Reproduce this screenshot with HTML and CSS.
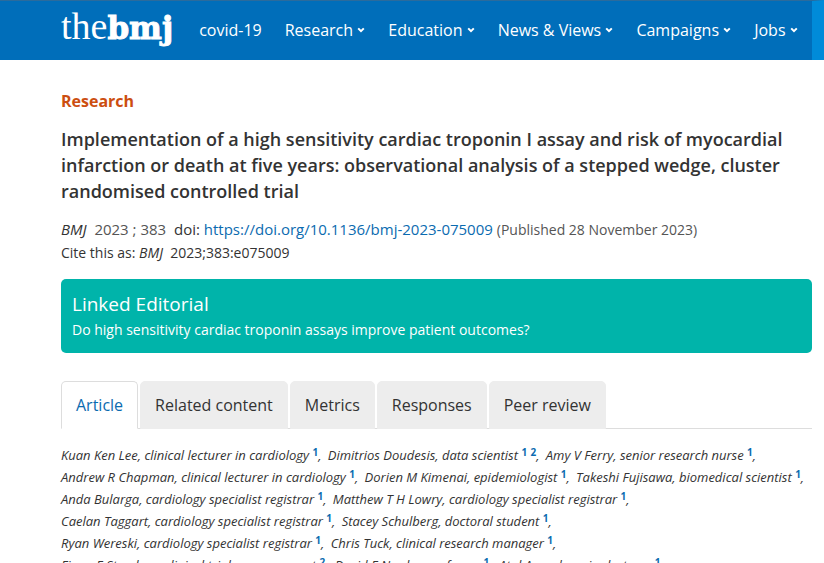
FILE: index.html
```html
<!DOCTYPE html>
<html lang="en">
<head>
    <meta charset="UTF-8">
    <meta name="viewport" content="width=device-width, initial-scale=1.0">
    <title>Implementation of a high sensitivity cardiac troponin I assay | The BMJ</title>
    <link rel="stylesheet" href="styles.css">
</head>
<body>
    <header class="site-header">
        <a class="logo" href="#">the<b>bmj</b></a>
        <nav class="main-nav">
            <a href="#">covid-19</a>
            <a href="#">Research <svg class="caret" viewBox="0 0 8 6"><path d="M1.2 1.4 4 4.2 6.8 1.4"/></svg></a>
            <a href="#">Education <svg class="caret" viewBox="0 0 8 6"><path d="M1.2 1.4 4 4.2 6.8 1.4"/></svg></a>
            <a href="#">News &amp; Views <svg class="caret" viewBox="0 0 8 6"><path d="M1.2 1.4 4 4.2 6.8 1.4"/></svg></a>
            <a href="#">Campaigns <svg class="caret" viewBox="0 0 8 6"><path d="M1.2 1.4 4 4.2 6.8 1.4"/></svg></a>
            <a href="#">Jobs <svg class="caret" viewBox="0 0 8 6"><path d="M1.2 1.4 4 4.2 6.8 1.4"/></svg></a>
        </nav>
    </header>

    <main class="article">
        <p class="section-label">Research</p>
        <h1>Implementation of a high sensitivity cardiac troponin I assay and risk of myocardial infarction or death at five years: observational analysis of a stepped wedge, cluster randomised controlled trial</h1>

        <div class="citation">
            <p class="doi"><em>BMJ</em>&nbsp; <span class="muted">2023 ; 383</span>&nbsp; doi: <a href="https://doi.org/10.1136/bmj-2023-075009">https://doi.org/10.1136/bmj-2023-075009</a> <span class="muted published">(Published 28 November 2023)</span></p>
            <p>Cite this as: <em>BMJ</em>&nbsp; 2023;383:e075009</p>
        </div>

        <section class="linked">
            <h2>Linked Editorial</h2>
            <a href="#">Do high sensitivity cardiac troponin assays improve patient outcomes?</a>
        </section>

        <nav class="tabs">
            <a class="tab active" href="#">Article</a>
            <a class="tab" href="#">Related content</a>
            <a class="tab" href="#">Metrics</a>
            <a class="tab" href="#">Responses</a>
            <a class="tab" href="#">Peer review</a>
        </nav>

        <ul class="authors">
            <li>Kuan Ken Lee, clinical lecturer in cardiology <a href="#">1</a>,</li>
            <li>Dimitrios Doudesis, data scientist <a href="#">1</a> <a href="#">2</a>,</li>
            <li>Amy V Ferry, senior research nurse <a href="#">1</a>,</li>
            <li>Andrew R Chapman, clinical lecturer in cardiology <a href="#">1</a>,</li>
            <li>Dorien M Kimenai, epidemiologist <a href="#">1</a>,</li>
            <li>Takeshi Fujisawa, biomedical scientist <a href="#">1</a>,</li>
            <li>Anda Bularga, cardiology specialist registrar <a href="#">1</a>,</li>
            <li>Matthew T H Lowry, cardiology specialist registrar <a href="#">1</a>,</li>
            <li>Caelan Taggart, cardiology specialist registrar <a href="#">1</a>,</li>
            <li>Stacey Schulberg, doctoral student <a href="#">1</a>,</li>
            <li>Ryan Wereski, cardiology specialist registrar <a href="#">1</a>,</li>
            <li>Chris Tuck, clinical research manager <a href="#">1</a>,</li>
            <li>Fiona E Strachan, clinical trials management <a href="#">2</a>,</li>
            <li>David E Newby, professor <a href="#">1</a>,</li>
            <li>Atul Anand, senior lecturer <a href="#">1</a></li>
        </ul>
    </main>
</body>
</html>
```
FILE: styles.css
```css
* {
    box-sizing: border-box;
}

body {
    margin: 0;
    background: #fff;
    color: #333;
    font-family: "Open Sans", "Noto Sans", sans-serif;
    font-size: 14px;
    overflow: hidden;
}

p, h1, h2 {
    margin: 0;
}

a {
    color: #0b6bb0;
    text-decoration: none;
}

.site-header {
    display: flex;
    height: 60px;
    padding-left: 61px;
    background: #006eba;
    border-top: 1px solid #2b6b9c;
    border-right: 12px solid #008bd9;
}

.logo {
    height: 60px;
    line-height: 50px;
    color: #fff;
    font-family: "Liberation Serif", serif;
    font-size: 38px;
    white-space: nowrap;
}

.logo b {
    font-family: "DejaVu Serif", serif;
    font-size: 31px;
    -webkit-text-stroke: 1px #fff;
}

.main-nav {
    display: flex;
    align-items: center;
    gap: 23px;
    padding: 0 0 2px 26px;
}

.main-nav a {
    color: #fff;
    font-size: 16px;
    white-space: nowrap;
}

.caret {
    width: 8px;
    height: 6px;
    vertical-align: 3px;
    fill: none;
    stroke: #fff;
    stroke-width: 2;
}

.article {
    padding: 30px 12px 0 61px;
}

.section-label {
    color: #cc4e10;
    font-size: 16px;
    font-weight: bold;
    line-height: 22px;
}

h1 {
    margin-top: 14px;
    font-size: 18px;
    font-weight: 600;
    line-height: 26px;
}

.citation {
    margin-top: 14px;
    line-height: 23px;
}

.doi {
    font-size: 15px;
}

.published {
    font-size: 14px;
}

.muted {
    color: #555;
}

.linked {
    margin-top: 15px;
    padding: 11px;
    background: #00b4aa;
    border-radius: 5px;
}

.linked h2 {
    color: #fff;
    font-size: 19px;
    font-weight: normal;
    line-height: 28px;
}

.linked a {
    display: block;
    color: #fff;
    line-height: 24px;
}

.tabs {
    display: flex;
    gap: 2px;
    margin-top: 28px;
    border-bottom: 1px solid #ddd;
}

.tab {
    padding: 0 14px;
    margin-bottom: -1px;
    background: #ededed;
    border: 1px solid #ededed;
    border-radius: 5px 5px 0 0;
    color: #333;
    font-size: 16px;
    line-height: 46px;
}

.tab.active {
    background: #fff;
    border-color: #ddd;
    border-bottom-color: #fff;
    color: #0b6bb0;
}

.authors {
    margin: 15px 0 0;
    padding: 0;
    list-style: none;
    font-size: 13px;
    font-style: italic;
    line-height: 22px;
}

.authors li {
    display: inline-block;
    margin-right: 3px;
}

.authors a {
    font-size: 10px;
    font-style: normal;
    font-weight: bold;
    line-height: 1;
    vertical-align: 4px;
}
```
